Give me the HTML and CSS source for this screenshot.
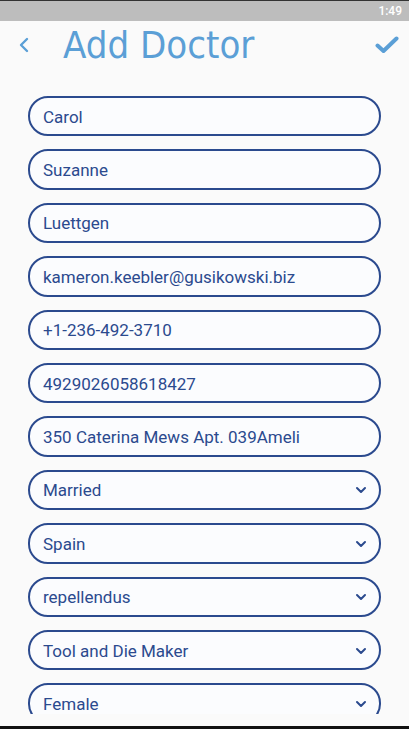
FILE: index.html
```html
<!DOCTYPE html>
<html>
<head>
<meta charset="utf-8">
<link rel="stylesheet" href="styles.css">
</head>
<body>
<div class="screen">
  <div class="statusbar"><span class="time">1:49</span></div>
  <div class="header">
    <svg class="back" width="12" height="16" viewBox="0 0 12 16"><path d="M9 2 L3 8 L9 14" fill="none" stroke="#5b9fd6" stroke-width="2.4" stroke-linecap="round" stroke-linejoin="round"/></svg>
    <h1 class="title">Add Doctor</h1>
    <svg class="check" width="24" height="18" viewBox="0 0 24 18"><path d="M2.5 9.5 L8.5 15 L21.5 2.5" fill="none" stroke="#5b9fd6" stroke-width="4" stroke-linecap="round" stroke-linejoin="round"/></svg>
  </div>
  <div class="list">
    <div class="field">Carol</div>
    <div class="field">Suzanne</div>
    <div class="field">Luettgen</div>
    <div class="field">kameron.keebler@gusikowski.biz</div>
    <div class="field">+1-236-492-3710</div>
    <div class="field">4929026058618427</div>
    <div class="field">350 Caterina Mews Apt. 039Ameli</div>
    <div class="field select"><span>Married</span><svg class="chev" width="12" height="8" viewBox="0 0 12 8"><path d="M2 2 L6 6 L10 2" fill="none" stroke="#2b4a8e" stroke-width="2" stroke-linecap="round" stroke-linejoin="round"/></svg></div>
    <div class="field select"><span>Spain</span><svg class="chev" width="12" height="8" viewBox="0 0 12 8"><path d="M2 2 L6 6 L10 2" fill="none" stroke="#2b4a8e" stroke-width="2" stroke-linecap="round" stroke-linejoin="round"/></svg></div>
    <div class="field select"><span>repellendus</span><svg class="chev" width="12" height="8" viewBox="0 0 12 8"><path d="M2 2 L6 6 L10 2" fill="none" stroke="#2b4a8e" stroke-width="2" stroke-linecap="round" stroke-linejoin="round"/></svg></div>
    <div class="field select"><span>Tool and Die Maker</span><svg class="chev" width="12" height="8" viewBox="0 0 12 8"><path d="M2 2 L6 6 L10 2" fill="none" stroke="#2b4a8e" stroke-width="2" stroke-linecap="round" stroke-linejoin="round"/></svg></div>
    <div class="field select"><span>Female</span><svg class="chev" width="12" height="8" viewBox="0 0 12 8"><path d="M2 2 L6 6 L10 2" fill="none" stroke="#2b4a8e" stroke-width="2" stroke-linecap="round" stroke-linejoin="round"/></svg></div>
  </div>
  <div class="spacer"></div>
  <div class="navbar"></div>
</div>
</body>
</html>
```
FILE: styles.css
```css
html, body {
  margin: 0;
  padding: 0;
  background: #fafafa;
}
.screen {
  width: 409px;
  height: 729px;
  display: flex;
  flex-direction: column;
  overflow: hidden;
  font-family: Roboto, "Liberation Sans", sans-serif;
}
.statusbar {
  height: 20px;
  flex: none;
  background: #bdbdbd;
  border-top: 1px solid #333;
  display: flex;
  justify-content: flex-end;
  align-items: center;
  padding-right: 7px;
}
.time {
  color: #fff;
  font-size: 12px;
  font-weight: 500;
}
.header {
  height: 48px;
  flex: none;
  display: flex;
  align-items: center;
  padding: 0 10px 0 18px;
}
.back {
  flex: none;
}
.title {
  margin: 0 0 0 33px;
  flex: 1;
  font-family: "DejaVu Sans Condensed", Roboto, sans-serif;
  font-weight: 500;
  font-size: 38px;
  color: #5b9fd6;
  letter-spacing: 0;
}
.check {
  flex: none;
}
.list {
  flex: 1;
  overflow: hidden;
  display: flex;
  flex-direction: column;
  gap: 13px;
  padding: 27px 28px 0 28px;
}
.field {
  flex: none;
  height: 35.4px;
  border: 2px solid #2b4a8e;
  border-radius: 20px;
  display: flex;
  align-items: center;
  padding: 1px 12px 0 13px;
  font-size: 17px;
  color: #2b4a8e;
  background: #fbfcfe;
}
.select {
  justify-content: space-between;
}
.spacer {
  height: 12px;
  flex: none;
}
.navbar {
  height: 3px;
  flex: none;
  background: #111;
}
```
